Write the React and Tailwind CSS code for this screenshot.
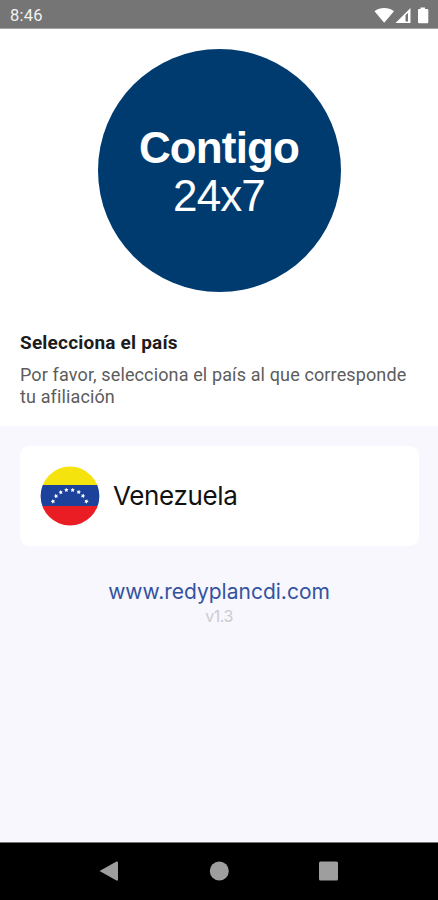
const STARS = [
  [13, 35.3],
  [16, 30],
  [20.7, 26.2],
  [26.3, 24],
  [32.7, 24],
  [38.7, 26],
  [43, 29.8],
  [46.4, 35.3],
];

function StatusBar() {
  return (
    <header className="flex h-[29px] shrink-0 items-center justify-between border-b border-[#a5a5a5] bg-[#757575] pl-[10px] pr-[8px] pt-[3px]">
      <span className="font-['Roboto',sans-serif] text-[16.5px] leading-5 tracking-[0.25px] text-[#f2f2f2]">8:46</span>
      <svg className="h-[18px] w-[56px]" viewBox="0 0 56 18" fill="#fff">
        <path d="M0.5 4.2C6 -0.2 14.500 -0.2 20 4.200L10.200 15.800Z" />
        <path fillRule="evenodd" d="M21.500 16L36.500 1V16ZM31.500 8V14.500H34V6Z" />
        <path d="M46.500 0.500H51V2H53.300Q54.300 2 54.300 3V15.300Q54.300 16.300 53.300 16.300H45Q44 16.300 44 15.300V3Q44 2 45 2H46.500Z" />
      </svg>
    </header>
  );
}

function Flag() {
  return (
    <svg className="size-[60px] shrink-0" viewBox="0 0 60 60">
      <clipPath id="flag-circle">
        <circle cx="30" cy="30" r="29.400" />
      </clipPath>
      <g clipPath="url(#flag-circle)">
        <rect width="60" height="19" fill="#f4e30d" />
        <rect y="19" width="60" height="21" fill="#1c429c" />
        <rect y="40" width="60" height="20" fill="#ea1d24" />
      </g>
      {STARS.map(([x, y]) => (
        <path
          key={x}
          transform={`translate(${x} ${y}) rotate(${(x - 29.7) * 1.5})`}
          fill="#fff"
          d="M0 -2.300L.7 -.9L2.200 -.7L1.100 .4L1.400 2L0 1.300L-1.400 2L-1.100 .4L-2.200 -.7L-.7 -.9Z"
        />
      ))}
    </svg>
  );
}

function NavBar() {
  return (
    <nav className="flex h-[58px] shrink-0 items-center justify-center border-t border-[#777] bg-black">
      <svg className="mb-px h-5 w-[240px]" viewBox="0 0 240 20" fill="#9e9e9e">
        <path d="M0.500 10L17.500 0.500Q19 0 19 1.500V18.500Q19 20 17.500 19.500Z" />
        <circle cx="120.300" cy="10" r="9.500" />
        <rect x="220" y="0.500" width="19" height="19" rx="1.500" />
      </svg>
    </nav>
  );
}

export default function App() {
  return (
    <div className="flex h-[900px] w-[438px] flex-col overflow-hidden bg-white">
      <StatusBar />
      <section className="flex h-[397px] shrink-0 flex-col pt-[20px]">
        <div className="flex size-[243px] flex-col items-center self-center rounded-full bg-[#003b70] pt-[75px] font-['Liberation_Sans',sans-serif] text-white">
          <span className="text-[44px] font-bold leading-[47px] tracking-[-0.85px]">Contigo</span>
          <span className="text-[44px] leading-[50px] tracking-[-0.9px]">24x7</span>
        </div>
        <div className="px-5 pt-[40px] font-['Roboto',sans-serif]">
          <h1 className="text-[19px] font-bold leading-[22px] tracking-[0.2px] text-[#1c1c1c]">Selecciona el país</h1>
          <p className="mt-[10px] text-[18px] leading-[21.500px] tracking-[0.13px] text-[#5c5c5c]">
            Por favor, selecciona el país al que corresponde
            <br />
            tu afiliación
          </p>
        </div>
      </section>
      <main className="flex grow flex-col bg-[#f7f7fd] pl-5 pr-[19px] pt-5">
        <div className="flex h-[100px] items-center rounded-[9px] bg-white pl-5">
          <Flag />
          <span className="ml-[13px] font-['Inter',sans-serif] text-[26px] leading-8 tracking-[-0.35px] text-[#111]">Venezuela</span>
        </div>
        <div className="flex flex-col items-center pr-px pt-[33px] font-['Inter',sans-serif]">
          <span className="text-[21px] leading-[26px] text-[#34539f]">www.redyplancdi.com</span>
          <span className="text-[16px] leading-[22px] tracking-[-0.5px] text-[#cbcbd0]">v1.3</span>
        </div>
      </main>
      <NavBar />
    </div>
  );
}
